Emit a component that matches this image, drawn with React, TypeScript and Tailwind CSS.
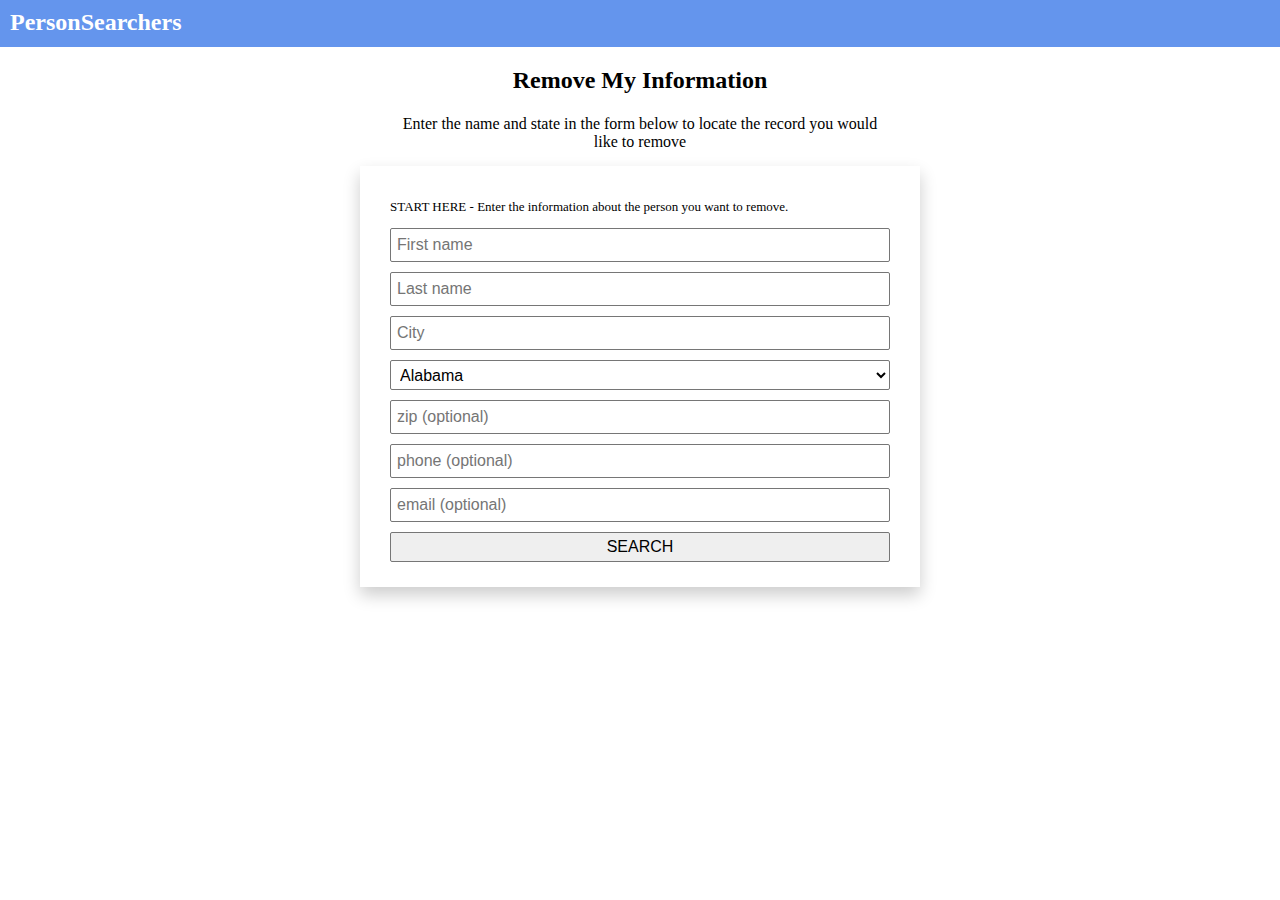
import React from "react";

const serif = { fontFamily: '"Liberation Serif", "Times New Roman", serif' };

export default function App() {
  const inputCls =
    "block w-full h-[34px] border border-[#767676] rounded-[2px] px-[6px] text-[16px] text-black placeholder:text-[#757575] bg-white font-['Liberation_Sans',Arial,sans-serif]";
  return (
    <div className="min-h-[900px] bg-white text-black" style={serif}>
      <header className="h-[47px] bg-[#6495ed] flex items-center px-[10px] pb-[3px]">
        <h1 className="text-[24px] font-bold text-white leading-none">PersonSearchers</h1>
      </header>
      <main className="flex flex-col items-center">
        <h2 className="text-[24px] font-bold mt-[20px] mb-[21px] leading-[27px]">Remove My Information</h2>
        <p className="w-[500px] text-center text-[16px] leading-[18px] mb-[15px]">
          Enter the name and state in the form below to locate the record you would like to remove
        </p>
        <div className="w-[560px] bg-white px-[30px] pt-[20px] pb-[25px] shadow-[0_8px_16px_0_rgba(0,0,0,0.2)]">
          <p className="text-[13px] leading-[15px] mt-[13px] mb-[14px]">
            START HERE - Enter the information about the person you want to remove.
          </p>
          <div className="flex flex-col gap-[10px]">
            <input className={inputCls} placeholder="First name" />
            <input className={inputCls} placeholder="Last name" />
            <input className={inputCls} placeholder="City" />
            <select
              className="block w-full h-[30px] border border-[#767676] rounded-[2px] pl-[5px] pr-[4px] text-[16px] text-black bg-white font-['Liberation_Sans',Arial,sans-serif]"
              defaultValue="Alabama"
            >
              <option>Alabama</option>
              <option>Alaska</option>
              <option>Arizona</option>
            </select>
            <input className={inputCls} placeholder="zip (optional)" />
            <input className={inputCls} placeholder="phone (optional)" />
            <input className={inputCls} placeholder="email (optional)" />
            <button className="block w-full h-[30px] border border-[#767676] rounded-[2px] bg-[#efefef] text-[16px] text-black font-['Liberation_Sans',Arial,sans-serif]">
              SEARCH
            </button>
          </div>
        </div>
      </main>
    </div>
  );
}
